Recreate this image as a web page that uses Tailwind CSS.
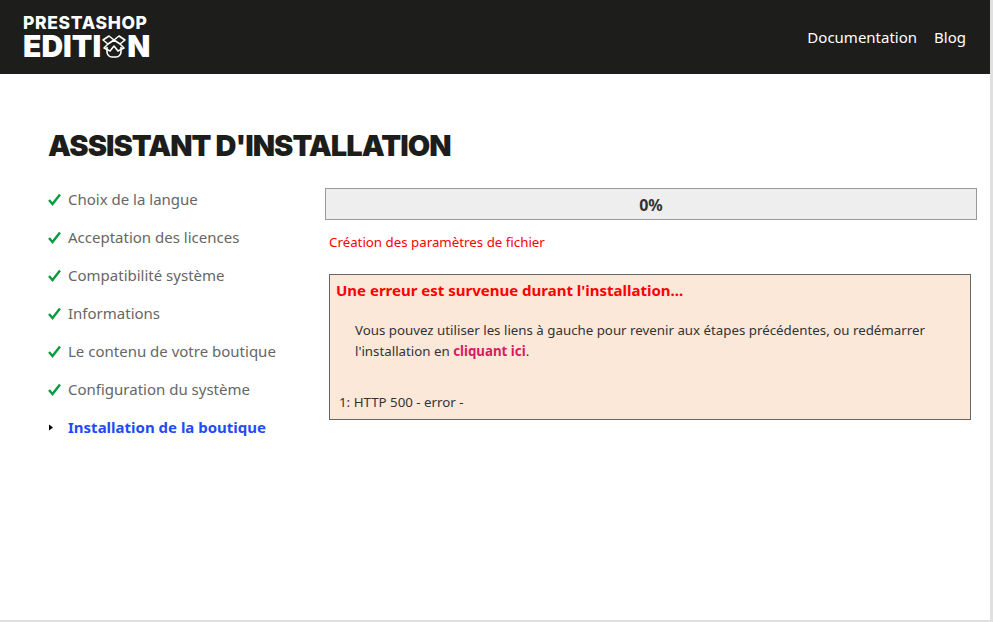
<!DOCTYPE html>
<html lang="fr">
  <head>
    <meta charset="UTF-8" />
    <title>Assistant d'installation</title>
    <script src="https://cdn.jsdelivr.net/npm/@tailwindcss/browser@4"></script>
  </head>
  <body class="bg-[#e0e0e0] h-[622px] overflow-hidden font-['Noto_Sans',sans-serif]">
    <div class="w-[990px] h-[620px] bg-white">
      <header class="h-[74px] bg-[#1d1d1b] flex items-center justify-between pl-[23px] pr-[24px]">
        <div class="text-white font-['Inter',sans-serif] font-black">
          <div class="text-[17.500px] leading-[14px] tracking-[0.65px] font-extrabold">PRESTASHOP</div>
          <div class="flex items-center mt-[4px] h-[24px] text-[30px] leading-[24px]">
            <span>EDITI</span>
            <svg class="w-[26px] h-[24px]" viewBox="0 0 26 24" fill="none" stroke="white" stroke-width="1.600" stroke-linejoin="round">
              <path d="M6 13v5a5 5 0 0 0 5 5h4a5 5 0 0 0 5-5v-5" />
              <path d="M13 6 8 2 2 6l5 4zM13 6l5-4 6 4-5 4zM7 10l-4 4 6 3 4-5 4 5 6-3-4-4-6-4z" />
            </svg>
            <span>N</span>
          </div>
        </div>
        <nav class="flex gap-[17px] pt-[1px] text-white text-[15px]">
          <a href="#">Documentation</a>
          <a href="#">Blog</a>
        </nav>
      </header>

      <main class="pl-[48px] pt-[52px]">
        <h1 class="text-[#1d1d1b] font-['Inter',sans-serif] font-black text-[29px] leading-[40px] tracking-[-0.95px]">ASSISTANT D'INSTALLATION</h1>

        <div class="flex mt-[22px]">
          <ul class="w-[277px] -mt-[8px] text-[15px] leading-[38px] text-[#666]">
            <li class="flex items-center gap-[7px]"><svg class="w-[13px] h-[13px] text-[#0a9b3f]" viewBox="0 0 13 13" fill="none" stroke="currentColor" stroke-width="2.400"><path d="m1 7 3.500 4L12 1.500" /></svg>Choix de la langue</li>
            <li class="flex items-center gap-[7px]"><svg class="w-[13px] h-[13px] text-[#0a9b3f]" viewBox="0 0 13 13" fill="none" stroke="currentColor" stroke-width="2.400"><path d="m1 7 3.500 4L12 1.500" /></svg>Acceptation des licences</li>
            <li class="flex items-center gap-[7px]"><svg class="w-[13px] h-[13px] text-[#0a9b3f]" viewBox="0 0 13 13" fill="none" stroke="currentColor" stroke-width="2.400"><path d="m1 7 3.500 4L12 1.500" /></svg>Compatibilité système</li>
            <li class="flex items-center gap-[7px]"><svg class="w-[13px] h-[13px] text-[#0a9b3f]" viewBox="0 0 13 13" fill="none" stroke="currentColor" stroke-width="2.400"><path d="m1 7 3.500 4L12 1.500" /></svg>Informations</li>
            <li class="flex items-center gap-[7px]"><svg class="w-[13px] h-[13px] text-[#0a9b3f]" viewBox="0 0 13 13" fill="none" stroke="currentColor" stroke-width="2.400"><path d="m1 7 3.500 4L12 1.500" /></svg>Le contenu de votre boutique</li>
            <li class="flex items-center gap-[7px]"><svg class="w-[13px] h-[13px] text-[#0a9b3f]" viewBox="0 0 13 13" fill="none" stroke="currentColor" stroke-width="2.400"><path d="m1 7 3.500 4L12 1.500" /></svg>Configuration du système</li>
            <li class="flex items-center gap-[7px] font-bold text-[#1f4cf5]"><svg class="w-[13px] h-[13px] text-black" viewBox="0 0 13 13" fill="currentColor"><path d="M1 3.500 5 6.500 1 9.500z" /></svg>Installation de la boutique</li>
          </ul>

          <div class="w-[652px]">
            <div class="h-[32px] bg-[#eee] border border-[#999] flex items-center justify-center pt-[1px] text-[16px] font-bold text-[#333]">0%</div>
            <p class="ml-[4px] mt-[12px] text-[13.300px] leading-[20px] text-[#f00]">Création des paramètres de fichier</p>
            <div class="ml-[4px] mt-[22px] w-[642px] h-[146px] bg-[#fbe8d9] border border-[#666] text-[13.300px] text-[#333]">
              <p class="pl-[6px] pt-[5px] text-[15px] leading-[21px] font-bold text-[#f00]">Une erreur est survenue durant l'installation...</p>
              <p class="pl-[25px] pr-[20px] mt-[19px] leading-[21px]">Vous pouvez utiliser les liens à gauche pour revenir aux étapes précédentes, ou redémarrer l'installation en <a href="#" class="font-bold text-[#d81b60]">cliquant ici</a>.</p>
              <p class="pl-[9px] mt-[30px] leading-[20px]">1: HTTP 500 - error -</p>
            </div>
          </div>
        </div>
      </main>
    </div>
  </body>
</html>
